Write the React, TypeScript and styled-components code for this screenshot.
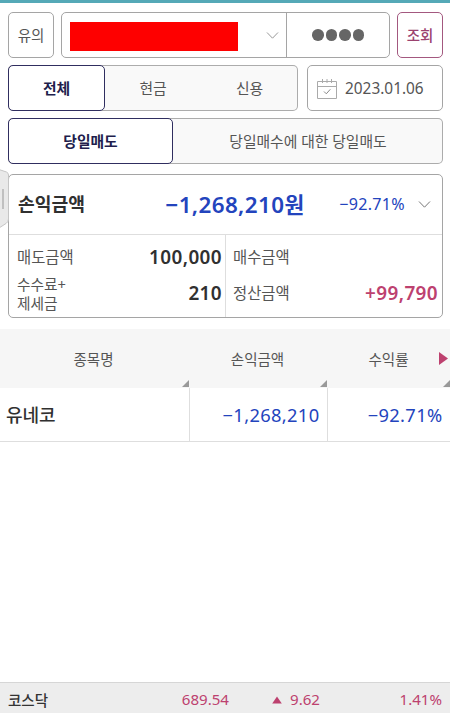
import React from "react";
import styled, { createGlobalStyle } from "styled-components";

const GlobalStyle = createGlobalStyle`
  *, *::before, *::after { box-sizing: border-box; }
  body {
    margin: 0;
    background: #fff;
    font-family: "Noto Sans", "Noto Sans CJK KR", sans-serif;
    color: #555;
    line-height: 1;
  }
`;

const Screen = styled.main`
  position: relative;
  display: flex;
  flex-direction: column;
  width: 450px;
  height: 713px;
  overflow: hidden;
  background: #fff;
  border-top: 3px solid #55a9b7;
`;

const Controls = styled.div`
  display: flex;
  flex-direction: column;
  gap: 7px;
  padding: 9px 7px 0 8px;
`;

const Row = styled.div`
  display: flex;
  justify-content: space-between;
  height: 46px;
`;

const Button = styled.button<{ $accent?: boolean }>`
  width: 46px;
  height: 46px;
  padding: 0;
  border: 1px solid ${(p) => (p.$accent ? "#a3587f" : "#a5a5a5")};
  border-radius: 5px;
  background: #fff;
  color: ${(p) => (p.$accent ? "#9b426f" : "#555")};
  font-family: inherit;
  font-size: 14.5px;
  font-weight: ${(p) => (p.$accent ? 500 : 400)};
  line-height: 1;
`;

const AccountField = styled.div`
  display: flex;
  width: 329px;
  border: 1px solid #a5a5a5;
  border-radius: 5px;
`;

const AccountSelect = styled.div`
  display: flex;
  align-items: center;
  justify-content: space-between;
  width: 225px;
  padding: 0 7px 0 8px;
  border-right: 1px solid #a5a5a5;
`;

const Redacted = styled.div`
  width: 168px;
  height: 29px;
  margin-top: 3px;
  background: #fe0000;
`;

const Password = styled.div`
  display: flex;
  flex: 1;
  align-items: center;
  justify-content: center;
  gap: 2px;
`;

const Dot = styled.i`
  width: 11.5px;
  height: 11.5px;
  border-radius: 50%;
  background: #666;
`;

const Segments = styled.div<{ $width: number }>`
  display: flex;
  width: ${(p) => p.$width}px;
  border-radius: 5px;
  background: #f9f9f9;
  box-shadow: inset 0 0 0 1px #acacac;
`;

const Segment = styled.div<{ $width: number; $active?: boolean }>`
  display: flex;
  align-items: center;
  justify-content: center;
  width: ${(p) => p.$width}px;
  border: ${(p) => (p.$active ? "1.5px solid #302e60" : "0")};
  border-radius: 5px;
  background: ${(p) => (p.$active ? "#fff" : "transparent")};
  color: ${(p) => (p.$active ? "#211d4c" : "#555")};
  font-size: 14.8px;
  font-weight: ${(p) => (p.$active ? 700 : 400)};
  white-space: nowrap;
`;

const DateField = styled.div`
  display: flex;
  align-items: center;
  gap: 8px;
  width: 136px;
  padding: 1px 0 0 9px;
  border: 1px solid #a5a5a5;
  border-radius: 5px;
  font-size: 15.4px;
`;

const Summary = styled.section`
  height: 144px;
  margin: 10px 7px 0 8px;
  border: 1px solid #a5a5a5;
  border-radius: 5px;
`;

const SummaryHead = styled.div`
  display: flex;
  align-items: center;
  height: 60px;
  padding: 0 11px 0 9px;
  border-bottom: 1px solid #dedede;
  color: #2344bd;
`;

const SummaryTitle = styled.h1`
  flex: 1;
  margin: 0;
  color: #303030;
  font-size: 18.2px;
  font-weight: 700;
`;

const Total = styled.div`
  margin-right: 35px;
  padding-top: 1px;
  font-size: 22.4px;
  font-weight: 600;
  letter-spacing: 0.4px;
  white-space: nowrap;
`;

const Unit = styled.span`
  font-size: 21.5px;
  font-weight: 700;
  letter-spacing: 0;
`;

const Rate = styled.div`
  margin-right: 13px;
  font-size: 16.1px;
  letter-spacing: 0.3px;
`;

const SummaryBody = styled.div`
  display: grid;
  grid-template-columns: 217px 1fr;
  height: 82px;
`;

const SummaryColumn = styled.dl<{ $divided?: boolean }>`
  display: grid;
  grid-template-rows: 37px 35px;
  align-content: start;
  align-items: center;
  margin: 0;
  padding: ${(p) => (p.$divided ? "4px 3px 0 8px" : "4px 4px 0 7px")};
  border-right: ${(p) => (p.$divided ? "1px solid #dedede" : "0")};
`;

const Detail = styled.div`
  display: flex;
  align-items: center;
  justify-content: space-between;
`;

const Label = styled.dt`
  font-size: 15.4px;
  line-height: 19px;
`;

const SmallLabel = styled(Label)`
  font-size: 14.7px;
`;

const Value = styled.dd<{ $gain?: boolean }>`
  margin: 0;
  color: ${(p) => (p.$gain ? "#bd416f" : "#303030")};
  font-size: 18.9px;
  font-weight: 600;
  letter-spacing: 0.4px;
`;

const Holdings = styled.div`
  display: grid;
  grid-template-columns: 190px 138px 122px;
  grid-template-rows: 59px 54px;
  margin-top: 11px;
`;

const HeadCell = styled.div`
  position: relative;
  display: flex;
  align-items: center;
  justify-content: center;
  padding: 1px 3px 0 0;
  background: #f6f6f6;
  font-size: 14.5px;

  &::after {
    content: "";
    position: absolute;
    right: 1px;
    bottom: 1px;
    border-bottom: 7px solid #999;
    border-left: 7px solid transparent;
  }
`;

const LastHeadCell = styled(HeadCell)`
  padding-right: 1px;

  &::after { right: 0; }
`;

const More = styled.svg`
  position: absolute;
  top: 23px;
  right: 2px;
`;

const Cell = styled.div<{ $name?: boolean; $last?: boolean }>`
  display: flex;
  align-items: center;
  justify-content: ${(p) => (p.$name ? "flex-start" : "flex-end")};
  padding: ${(p) => (p.$name ? 0 : 1)}px 7.5px 0 6px;
  border-right: ${(p) => (p.$last ? "0" : "1px solid #dedede")};
  border-bottom: 1px solid #dedede;
  color: ${(p) => (p.$name ? "#303030" : "#2344bd")};
  font-size: ${(p) => (p.$name ? 18 : 18.3)}px;
  font-weight: ${(p) => (p.$name ? 500 : 400)};
  letter-spacing: ${(p) => (p.$name ? 0 : 0.35)}px;
`;

const IndexBar = styled.footer`
  display: grid;
  grid-template-columns: 152px 69px 91px 1fr;
  align-items: center;
  height: 31px;
  margin-top: auto;
  padding: 4px 8px 0 8px;
  border-top: 1px solid #d6d6d6;
  background: #ededed;
  color: #bd416f;
  font-size: 15.1px;
  text-align: right;
`;

const IndexName = styled.div`
  color: #333;
  font-size: 14.5px;
  font-weight: 500;
  text-align: left;
`;

const Change = styled.div`
  display: flex;
  align-items: center;
  justify-content: flex-end;
  gap: 8px;
`;

const DrawerHandle = styled.svg`
  position: absolute;
  top: 165px;
  left: 0;
`;

const Chevron = ({ color }: { color: string }) => (
  <svg width="13" height="9" viewBox="0 0 13 9" fill="none" stroke={color}>
    <path d="M1 1.5 6.5 7.2 12 1.5" />
  </svg>
);

const CalendarIcon = () => (
  <svg width="20" height="20" viewBox="0 0 20 20" fill="none" stroke="#aaa">
    <path d="M.5 2.5h19v17H.5zM.5 7.5h19M5.5 0v4M10 0v4M14.5 0v4" />
    <path d="m7 12.5 2.3 2.3 4-4.5" stroke="#888" />
  </svg>
);

export default function App() {
  return (
    <>
      <GlobalStyle />
      <Screen>
        <Controls>
          <Row>
            <Button>유의</Button>
            <AccountField>
              <AccountSelect>
                <Redacted />
                <Chevron color="#999" />
              </AccountSelect>
              <Password>
                {[0, 1, 2, 3].map((i) => <Dot key={i} />)}
              </Password>
            </AccountField>
            <Button $accent>조회</Button>
          </Row>
          <Row>
            <Segments $width={290}>
              <Segment $width={97} $active>전체</Segment>
              <Segment $width={96}>현금</Segment>
              <Segment $width={97}>신용</Segment>
            </Segments>
            <DateField><CalendarIcon />2023.01.06</DateField>
          </Row>
          <Row>
            <Segments $width={435}>
              <Segment $width={165} $active>당일매도</Segment>
              <Segment $width={270}>당일매수에 대한 당일매도</Segment>
            </Segments>
          </Row>
        </Controls>

        <Summary>
          <SummaryHead>
            <SummaryTitle>손익금액</SummaryTitle>
            <Total>−1,268,210<Unit>원</Unit></Total>
            <Rate>−92.71%</Rate>
            <Chevron color="#777" />
          </SummaryHead>
          <SummaryBody>
            <SummaryColumn $divided>
              <Detail><Label>매도금액</Label><Value>100,000</Value></Detail>
              <Detail><SmallLabel>수수료+<br />제세금</SmallLabel><Value>210</Value></Detail>
            </SummaryColumn>
            <SummaryColumn>
              <Detail><Label>매수금액</Label></Detail>
              <Detail><Label>정산금액</Label><Value $gain>+99,790</Value></Detail>
            </SummaryColumn>
          </SummaryBody>
        </Summary>

        <Holdings>
          <HeadCell>종목명</HeadCell>
          <HeadCell>손익금액</HeadCell>
          <LastHeadCell>
            수익률
            <More width="9" height="13" viewBox="0 0 9 13"><path d="M0 0 9 6.5 0 13Z" fill="#bd416f" /></More>
          </LastHeadCell>
          <Cell $name>유네코</Cell>
          <Cell>−1,268,210</Cell>
          <Cell $last>−92.71%</Cell>
        </Holdings>

        <IndexBar>
          <IndexName>코스닥</IndexName>
          <div>689.54</div>
          <Change>
            <svg width="10" height="8" viewBox="0 0 10 8"><path d="M5 .5 9.8 7.5H.2Z" fill="#bd416f" /></svg>
            9.62
          </Change>
          <div>1.41%</div>
        </IndexBar>

        <DrawerHandle width="9" height="62" viewBox="0 0 9 62">
          <path d="M-1 1.5 6.5 4Q8.5 5 8.5 7V51Q8.5 54 6 55.5L-1 60Z" fill="#e9e9e9" stroke="#c5c5c5" />
          <path d="M3 21v20" stroke="#b2b2b2" strokeWidth="1.5" />
        </DrawerHandle>
      </Screen>
    </>
  );
}
